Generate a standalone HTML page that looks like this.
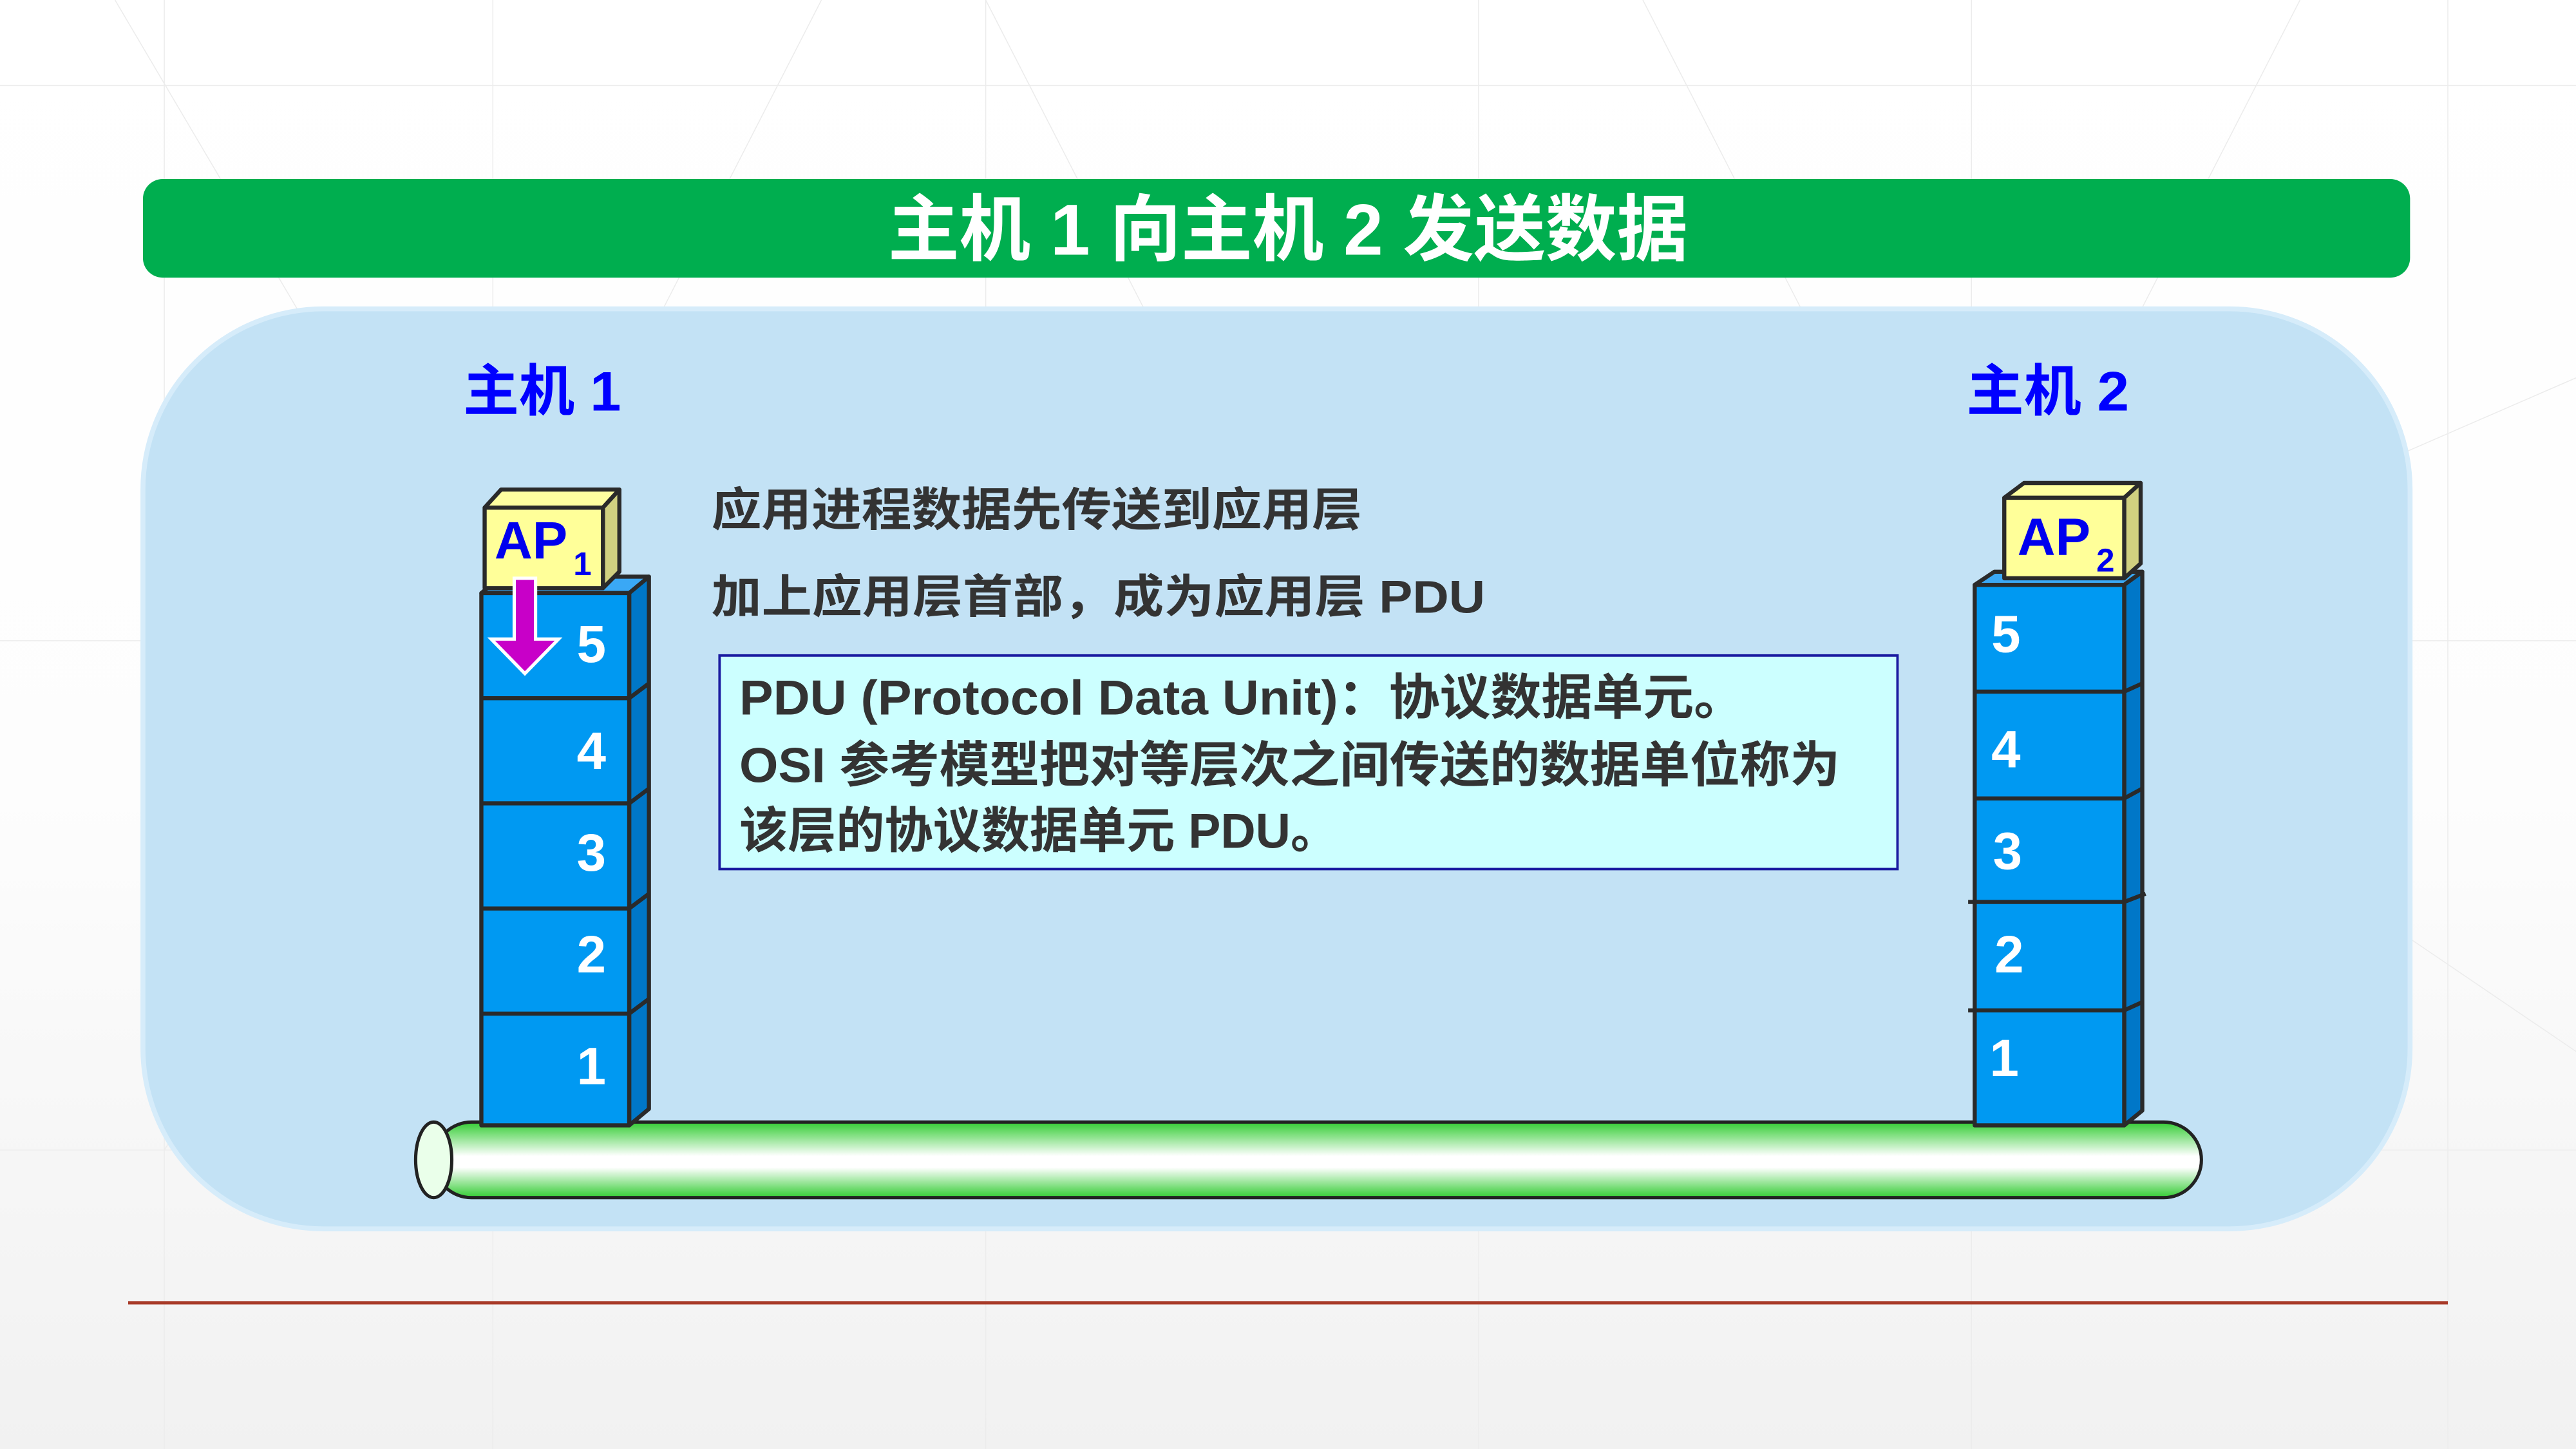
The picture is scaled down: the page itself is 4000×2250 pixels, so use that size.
<!DOCTYPE html>
<html><head><meta charset="utf-8"><style>
html,body{margin:0;padding:0;width:4000px;height:2250px;overflow:hidden;background:#fff}
svg{display:block}
text{font-family:"Liberation Sans","Noto Sans CJK SC",sans-serif;font-weight:bold}
</style></head><body>
<svg width="4000" height="2250" viewBox="0 0 1568 882" xmlns="http://www.w3.org/2000/svg">
<defs>
<linearGradient id="bg" x1="0" y1="0" x2="0" y2="1">
<stop offset="0" stop-color="#ffffff"/><stop offset="0.55" stop-color="#fdfdfd"/><stop offset="1" stop-color="#f1f1f1"/></linearGradient>
<linearGradient id="pipe" x1="0" y1="0" x2="0" y2="1">
<stop offset="0" stop-color="#33cc33"/><stop offset="0.45" stop-color="#ffffff"/><stop offset="0.6" stop-color="#ffffff"/><stop offset="1" stop-color="#33cc33"/></linearGradient>
</defs>
<rect width="1568" height="882" fill="url(#bg)"/>
<g stroke="#ececec" stroke-width="0.6" fill="none">
<path d="M0 52H1568M0 390H1568M0 700H1568M100 0V882M300 0V882M600 0V882M900 0V882M1200 0V882M1490 0V882"/>
<path d="M70 0L300 390L100 700M300 390L500 0M600 0L800 390L600 700M1000 0L1200 390L1400 0M1200 390L1568 640M1568 230L1200 390"/>
</g>
<rect x="87" y="109" width="1380" height="60" rx="12" fill="#00ae4f"/>
<text x="784" y="155" text-anchor="middle" font-size="44" fill="#fff" textLength="487" lengthAdjust="spacingAndGlyphs">主机 1 向主机 2 发送数据</text>
<rect x="87" y="188" width="1380" height="560" rx="110" fill="#c3e2f5" stroke="#d6ecfa" stroke-width="3"/>
<text x="282" y="250" font-size="34" fill="#0000ff" textLength="96" lengthAdjust="spacingAndGlyphs">主机 1</text>
<text x="1197" y="250" font-size="34" fill="#0000ff" textLength="99" lengthAdjust="spacingAndGlyphs">主机 2</text>
<text x="433" y="320" font-size="28" fill="#333" textLength="396" lengthAdjust="spacingAndGlyphs">应用进程数据先传送到应用层</text>
<text x="433" y="373" font-size="28" fill="#333" textLength="471" lengthAdjust="spacingAndGlyphs">加上应用层首部，成为应用层 PDU</text>
<rect x="438" y="399" width="717" height="130" fill="#ccffff" stroke="#1a1aa0" stroke-width="1.5"/>
<g font-size="30" fill="#333">
<text x="450" y="435" textLength="612" lengthAdjust="spacingAndGlyphs">PDU (Protocol Data Unit)：协议数据单元。</text>
<text x="450" y="476" textLength="670" lengthAdjust="spacingAndGlyphs">OSI 参考模型把对等层次之间传送的数据单位称为</text>
<text x="450" y="516" textLength="365" lengthAdjust="spacingAndGlyphs">该层的协议数据单元 PDU。</text>
</g>
<!-- pipe -->
<rect x="264" y="683" width="1076" height="46" rx="23" fill="url(#pipe)" stroke="#222" stroke-width="2"/>
<ellipse cx="264" cy="706" rx="11" ry="23" fill="#eaffea" stroke="#222" stroke-width="2"/>
<!-- left stack -->
<g stroke="#2a2a2a" stroke-width="2.5" stroke-linejoin="round">
<polygon points="293,361 305,351 395,351 383,361" fill="#3aa8f5"/>
<polygon points="383,361 395,351 395,675 383,685" fill="#0077c8"/>
<rect x="293" y="361" width="90" height="324" fill="#0099f2"/>
<path d="M293 425H383L395 416M293 489H383L395 480M293 553H383L395 544M293 617H383L395 608" fill="none"/>
<polygon points="295,309 305,298 377,298 367,309" fill="#ffffa0"/>
<polygon points="367,309 377,298 377,348 367,358" fill="#d0d080"/>
<rect x="295" y="309" width="72" height="49" fill="#ffff99"/>
</g>
<text x="301" y="340" font-size="32" fill="#0000ee">AP</text>
<text x="349" y="350" font-size="20" fill="#0000ee">1</text>
<polygon points="313,352 326,352 326,389 340,389 319.5,410 299,389 313,389" fill="#c800c8" stroke="#fff" stroke-width="2"/>
<g font-size="32" fill="#fff" text-anchor="middle">
<text x="360" y="403">5</text><text x="360" y="468">4</text><text x="360" y="530">3</text><text x="360" y="592">2</text><text x="360" y="660">1</text>
</g>
<!-- right stack -->
<g stroke="#2a2a2a" stroke-width="2.5" stroke-linejoin="round">
<polygon points="1202,356 1214,348 1304,348 1293,356" fill="#3aa8f5"/>
<polygon points="1293,356 1304,348 1304,676 1293,685" fill="#0077c8"/>
<rect x="1202" y="356" width="91" height="329" fill="#0099f2"/>
<path d="M1202 421H1293L1304 416M1202 486H1293L1304 480M1198 549H1293L1306 544M1198 615H1293L1304 610" fill="none"/>
<polygon points="1220,303 1232,294 1303,294 1293,303" fill="#ffffa0"/>
<polygon points="1293,303 1303,294 1303,343 1293,352" fill="#d0d080"/>
<rect x="1220" y="303" width="73" height="49" fill="#ffff99"/>
</g>
<text x="1228" y="338" font-size="32" fill="#0000ee">AP</text>
<text x="1276" y="348" font-size="20" fill="#0000ee">2</text>
<g font-size="32" fill="#fff" text-anchor="middle">
<text x="1221" y="397">5</text><text x="1221" y="467">4</text><text x="1222" y="529">3</text><text x="1223" y="592">2</text><text x="1220" y="655">1</text>
</g>
<line x1="78" y1="793" x2="1490" y2="793" stroke="#a83a28" stroke-width="2"/>
</svg>
</body></html>
